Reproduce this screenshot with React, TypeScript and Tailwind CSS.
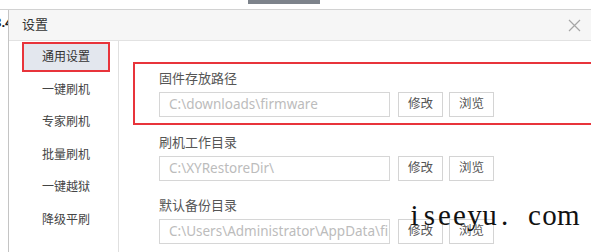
const font = "font-['Noto_Sans','Noto_Sans_CJK_SC',sans-serif]";

const menu = ['通用设置', '一键刷机', '专家刷机', '批量刷机', '一键越狱', '降级平刷'];

const groups = [
  { label: '固件存放路径', value: 'C:\\downloads\\firmware', marked: true },
  { label: '刷机工作目录', value: 'C:\\XYRestoreDir\\', marked: false },
  { label: '默认备份目录', value: 'C:\\Users\\Administrator\\AppData\\firmware', marked: false },
];

function PathRow({ label, value, marked }: { label: string; value: string; marked: boolean }) {
  return (
    <div className="relative flex flex-col">
      {marked && (
        <div className="pointer-events-none absolute left-[-26px] top-[-7px] right-[-13px] bottom-[-8px] border-2 border-[#e8343b]" />
      )}
      <div className="h-[18px] text-[13px] leading-[18px] text-[#555]">{label}</div>
      <div className="mt-[5px] flex items-center">
        <div className="flex h-[25px] w-[231px] items-center overflow-hidden whitespace-nowrap border border-[#d6d6d6] pl-[9px] text-[13.5px] text-[#bcbcbc]">
          {value}
        </div>
        <button className="ml-[8px] h-[25px] w-[45px] border border-[#d4d4d4] bg-white text-[12.5px] text-[#555]">
          修改
        </button>
        <button className="ml-[6px] h-[25px] w-[45px] border border-[#d4d4d4] bg-white text-[12.5px] text-[#555]">
          浏览
        </button>
      </div>
    </div>
  );
}

export default function App() {
  const mark = 'iseeyu. com'.split('');
  return (
    <div className={`relative h-[252px] w-[591px] overflow-hidden bg-white ${font}`}>
      {/* strip of the window behind */}
      <div className="relative h-[10px] border-b border-[#d2d2d2] bg-white">
        <div className="absolute left-[248px] top-0 h-[4px] w-[72px] bg-[#7d838b]" />
      </div>

      <div className="flex h-[242px]">
        <div className="relative w-[8px] overflow-hidden">
          <span className="absolute left-[-6px] top-[3px] text-[13px] font-bold text-[#222]">3.4</span>
        </div>

        <div className="flex flex-1 flex-col border-l border-[#c4c4c4] bg-white">
          <div className="flex h-[31px] items-center justify-between border-b border-[#e2e2e2] bg-[#f6f6f6] pl-[13px] pr-[10px]">
            <span className="text-[13px] text-[#333]">设置</span>
            <svg width="13" height="13" viewBox="0 0 13 13">
              <path d="M1 1 L12 12 M12 1 L1 12" stroke="#a6a6a6" strokeWidth="1.2" />
            </svg>
          </div>

          <div className="flex flex-1">
            <div className="flex w-[110px] flex-col gap-[2.5px] border-r border-[#e0e0e0] pt-[1px]">
              {menu.map((m, i) => (
                <div
                  key={m}
                  className={
                    i === 0
                      ? 'ml-[13px] flex h-[30px] w-[88px] items-center justify-center border-2 border-[#e8343b] bg-[#e3e7ee] text-[12px] text-[#333]'
                      : 'ml-[13px] flex h-[30px] w-[88px] items-center justify-center text-[12px] text-[#444]'
                  }
                >
                  {m}
                </div>
              ))}
            </div>

            <div className="flex flex-1 flex-col gap-[15.5px] pl-[40px] pt-[28px]">
              {groups.map((g) => (
                <PathRow key={g.label} {...g} />
              ))}
            </div>
          </div>
        </div>
      </div>

      {/* watermark */}
      <div className="absolute left-[407px] top-[201px] flex font-['Liberation_Serif',serif] text-[29px] leading-[29px] text-[#111]">
        {mark.map((c, i) => (
          <span key={i} className="inline-block w-[15px] text-center">
            {c === ' ' ? '\u00a0' : c}
          </span>
        ))}
      </div>
    </div>
  );
}
